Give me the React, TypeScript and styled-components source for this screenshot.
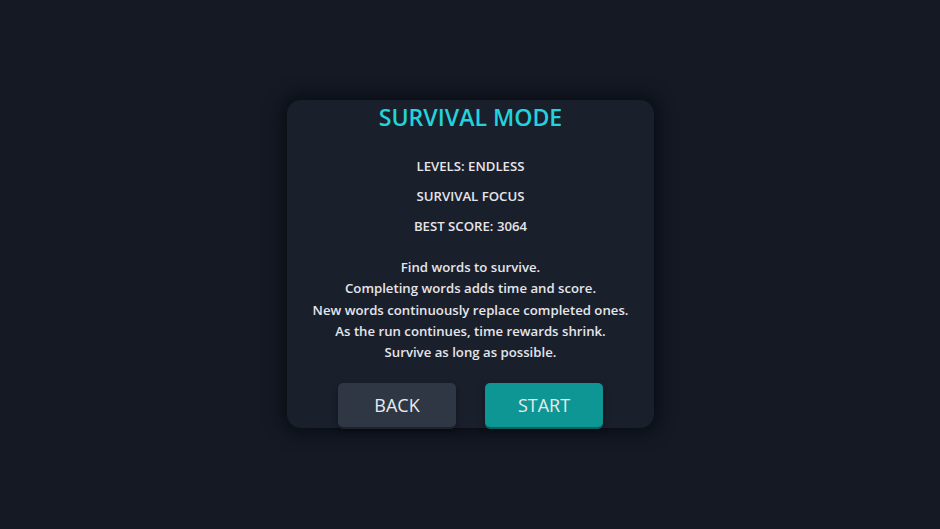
import React from "react";
import styled, { createGlobalStyle } from "styled-components";

const Global = createGlobalStyle`
  html, body { margin: 0; padding: 0; background: #141924; }
  body { font-family: "Open Sans", "Noto Sans", sans-serif; }
`;

const Page = styled.div`
  width: 940px;
  height: 529px;
  display: flex;
  align-items: flex-start;
  justify-content: center;
  padding-top: 100px;
  box-sizing: border-box;
  background: #141924;
`;

const Panel = styled.div`
  width: 367px;
  height: 328px;
  box-sizing: border-box;
  margin-left: 1px;
  background: #1a1f2c;
  border-radius: 14px;
  box-shadow: 0 0 18px 4px rgba(5, 8, 14, 0.75);
  display: flex;
  flex-direction: column;
  align-items: center;
  color: #e4e6ea;
  font-weight: 600;
`;

const Title = styled.h1`
  margin: 0;
  font-size: 23.1px;
  line-height: 34px;
  font-weight: 600;
  color: #22d3dd;
`;

const Stats = styled.div`
  margin-top: 17px;
  display: flex;
  flex-direction: column;
  align-items: center;
`;

const Stat = styled.div`
  font-size: 13.2px;
  line-height: 30px;
`;

const Description = styled.div`
  margin-top: 16px;
  display: flex;
  flex-direction: column;
  align-items: center;
  text-align: center;
`;

const Line = styled.div`
  font-size: 13.2px;
  line-height: 21.3px;
`;

const Buttons = styled.div`
  margin-top: 20px;
  display: flex;
  gap: 29px;
`;

const Button = styled.button<{ $primary?: boolean }>`
  width: 118px;
  height: 44px;
  border: none;
  border-radius: 5px;
  font-family: "Open Sans", "Noto Sans", sans-serif;
  font-size: 18px;
  font-weight: 500;
  color: #e8ebee;
  background: ${(p) => (p.$primary ? "#0e9694" : "#2e3743")};
  box-shadow: 0 2px 0 ${(p) => (p.$primary ? "#0a5f61" : "#1d232c")},
    0 3px 6px rgba(0, 0, 0, 0.4);
  cursor: pointer;
  padding: 0;
`;

export default function App() {
  return (
    <>
      <Global />
      <Page>
        <Panel>
          <Title>SURVIVAL MODE</Title>
          <Stats>
            <Stat>LEVELS: ENDLESS</Stat>
            <Stat>SURVIVAL FOCUS</Stat>
            <Stat>BEST SCORE: 3064</Stat>
          </Stats>
          <Description>
            <Line>Find words to survive.</Line>
            <Line>Completing words adds time and score.</Line>
            <Line>New words continuously replace completed ones.</Line>
            <Line>As the run continues, time rewards shrink.</Line>
            <Line>Survive as long as possible.</Line>
          </Description>
          <Buttons>
            <Button>BACK</Button>
            <Button $primary>START</Button>
          </Buttons>
        </Panel>
      </Page>
    </>
  );
}
